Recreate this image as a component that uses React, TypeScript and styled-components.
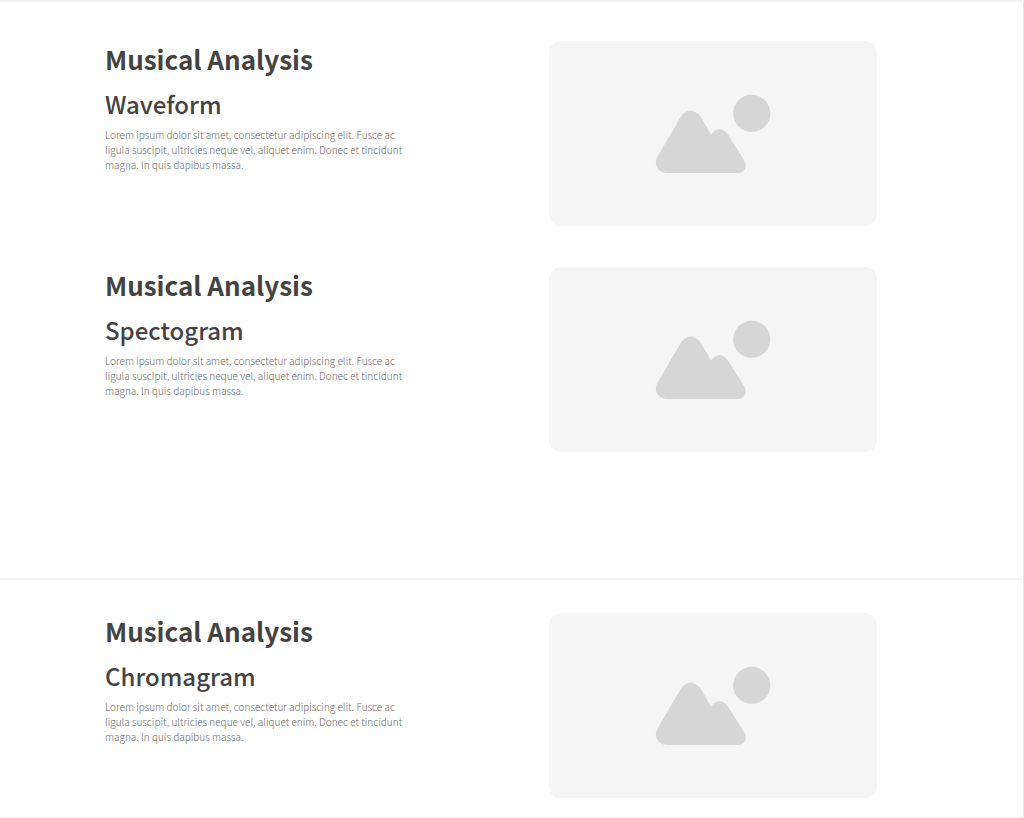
import React from "react";
import styled, { createGlobalStyle } from "styled-components";

const GlobalStyle = createGlobalStyle`
  *, *::before, *::after { box-sizing: border-box; }
  body {
    margin: 0;
    background: #ffffff;
    color: #434343;
    font-family: "Source Sans Pro", "Noto Sans CJK SC", sans-serif;
  }
`;

const Page = styled.main`
  border-right: 1px solid #e8e8e8;
  border-bottom: 1px solid #eeeeee;
`;

const Sheet = styled.section<{ $top: number; $bottom: number }>`
  display: flex;
  flex-direction: column;
  gap: 41px;
  padding: ${(p) => p.$top}px 146px ${(p) => p.$bottom}px 105px;
  border-top: 2px solid #f3f3f3;
`;

const Row = styled.article`
  display: grid;
  grid-template-columns: minmax(0, 1fr) 328px;
  column-gap: 40px;
  align-items: start;
`;

const Copy = styled.div`
  max-width: 308px;
`;

const Title = styled.h2`
  margin: 0;
  font-size: 26px;
  line-height: 36px;
  font-weight: 700;
`;

const Subtitle = styled.h3`
  margin: 9px 0 5px;
  font-size: 24px;
  line-height: 36px;
  font-weight: 500;
`;

const Text = styled.p`
  margin: 0;
  color: #686868;
  font-size: 10px;
  line-height: 15px;
  font-weight: 300;
`;

const Media = styled.div`
  display: flex;
  align-items: center;
  justify-content: center;
  height: 185px;
  border-radius: 12px;
  background: #f5f5f5;
`;

const Placeholder = styled.svg`
  display: block;
  width: 116px;
  height: 80px;
  fill: #d6d6d6;
`;

function PictureIcon() {
  return (
    <Placeholder viewBox="0 0 116 80" role="img" aria-label="Image placeholder">
      <circle cx="96.700" cy="19.400" r="18.600" />
      <path d="M2.500 62.500L24.800 24.500C30.500 14.300 41 14.300 46.700 24.500L56 40.500C61 33.500 68 33.200 73 40.500L89 66C93 73 89.500 79 82 79H13C3 79 -2 71 2.500 62.500Z" />
    </Placeholder>
  );
}

function Analysis({ name }: { name: string }) {
  return (
    <Row>
      <Copy>
        <Title>Musical Analysis</Title>
        <Subtitle>{name}</Subtitle>
        <Text>
          Lorem ipsum dolor sit amet, consectetur adipiscing elit. Fusce ac ligula suscipit,
          ultricies neque vel, aliquet enim. Donec et tincidunt magna. In quis dapibus massa.
        </Text>
      </Copy>
      <Media>
        <PictureIcon />
      </Media>
    </Row>
  );
}

export default function App() {
  return (
    <>
      <GlobalStyle />
      <Page>
        <Sheet $top={39} $bottom={126}>
          <Analysis name="Waveform" />
          <Analysis name="Spectogram" />
        </Sheet>
        <Sheet $top={33} $bottom={19}>
          <Analysis name="Chromagram" />
        </Sheet>
      </Page>
    </>
  );
}
